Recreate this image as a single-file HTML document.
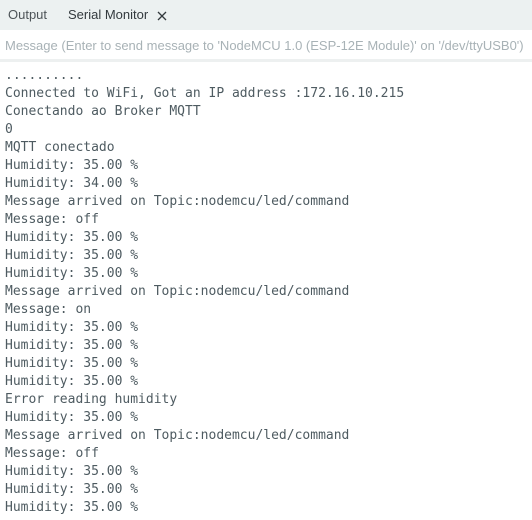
<!DOCTYPE html>
<html><head><style>
body{margin:0;width:532px;height:520px;overflow:hidden;background:#fff;font-family:"Liberation Sans",sans-serif}
.hd{height:30px;background:#ecf1f1;position:relative;font-size:13px;color:#4d5458}
.hd span{position:absolute;top:7px}
.in{height:29px;position:relative;font-size:13px;color:#a8b2b6}
.in span{position:absolute;left:5px;top:8px;white-space:nowrap}
.bar{height:3px;background:#edf0f0}
pre{margin:0;padding:5px 0 0 5px;font-family:"DejaVu Sans Mono",monospace;font-size:13px;line-height:18px;color:#4e5b61}
</style></head><body>
<div class="hd"><span style="left:8px">Output</span><span style="left:68px;color:#333a3e">Serial Monitor</span>
<svg style="position:absolute;left:157px;top:11px" width="10" height="10"><path d="M1 1L9 9M9 1L1 9" stroke="#333a3e" stroke-width="1.3"/></svg></div>
<div class="in"><span>Message (Enter to send message to 'NodeMCU 1.0 (ESP-12E Module)' on '/dev/ttyUSB0')</span></div>
<div class="bar"></div>
<pre>..........
Connected to WiFi, Got an IP address :172.16.10.215
Conectando ao Broker MQTT
0
MQTT conectado
Humidity: 35.00 %
Humidity: 34.00 %
Message arrived on Topic:nodemcu/led/command
Message: off
Humidity: 35.00 %
Humidity: 35.00 %
Humidity: 35.00 %
Message arrived on Topic:nodemcu/led/command
Message: on
Humidity: 35.00 %
Humidity: 35.00 %
Humidity: 35.00 %
Humidity: 35.00 %
Error reading humidity
Humidity: 35.00 %
Message arrived on Topic:nodemcu/led/command
Message: off
Humidity: 35.00 %
Humidity: 35.00 %
Humidity: 35.00 %</pre>
</body></html>
